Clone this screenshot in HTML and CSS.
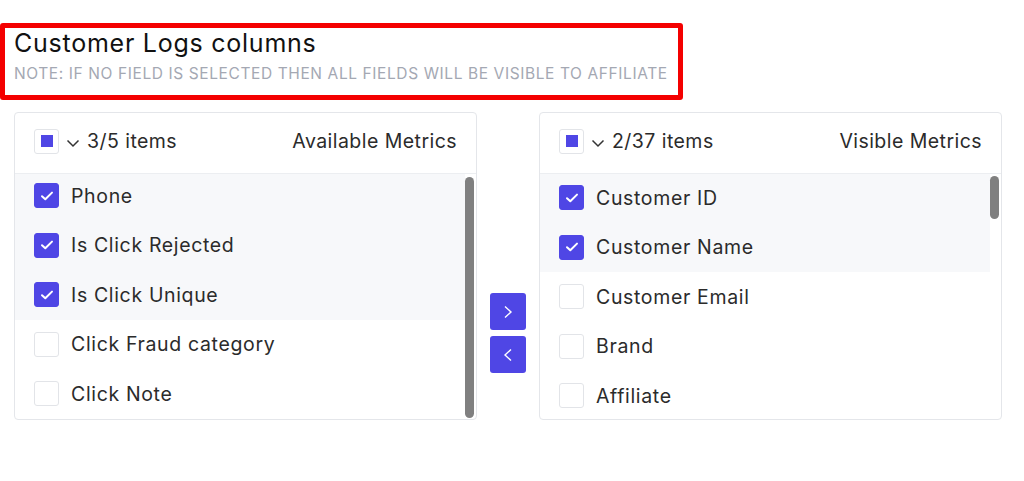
FILE: index.html
```html
<!DOCTYPE html>
<html lang="en">
<head>
<meta charset="utf-8">
<title>Customer Logs columns</title>
<link rel="stylesheet" href="styles.css">
</head>
<body>
<div class="page">
  <div class="title-box">
    <div class="title">Customer Logs columns</div>
    <div class="note">NOTE: IF NO FIELD IS SELECTED THEN ALL FIELDS WILL BE VISIBLE TO AFFILIATE</div>
  </div>

  <div class="transfer">
    <div class="panel">
      <div class="panel-head">
        <span class="cb cb-partial"><span class="cb-dot"></span></span>
        <svg class="chev" width="14" height="10" viewBox="0 0 14 10"><path d="M1.5 2.5 L7 8 L12.5 2.5" fill="none" stroke="#333" stroke-width="1.5"/></svg>
        <span class="count">3/5 items</span>
        <span class="head-title">Available Metrics</span>
      </div>
      <div class="panel-body">
        <ul class="list list-left">
          <li class="item sel"><span class="cb cb-on"><svg width="14" height="12" viewBox="0 0 14 12"><path d="M2 6.2 L5.3 9.3 L12 2.6" fill="none" stroke="#fff" stroke-width="2" stroke-linecap="round" stroke-linejoin="round"/></svg></span><span class="label">Phone</span></li>
          <li class="item sel"><span class="cb cb-on"><svg width="14" height="12" viewBox="0 0 14 12"><path d="M2 6.2 L5.3 9.3 L12 2.6" fill="none" stroke="#fff" stroke-width="2" stroke-linecap="round" stroke-linejoin="round"/></svg></span><span class="label">Is Click Rejected</span></li>
          <li class="item sel"><span class="cb cb-on"><svg width="14" height="12" viewBox="0 0 14 12"><path d="M2 6.2 L5.3 9.3 L12 2.6" fill="none" stroke="#fff" stroke-width="2" stroke-linecap="round" stroke-linejoin="round"/></svg></span><span class="label">Is Click Unique</span></li>
          <li class="item"><span class="cb"></span><span class="label">Click Fraud category</span></li>
          <li class="item"><span class="cb"></span><span class="label">Click Note</span></li>
        </ul>
        <div class="scrollbar scroll-left"></div>
      </div>
    </div>

    <div class="ops">
      <button class="op"><svg width="12" height="16" viewBox="0 0 12 16"><path d="M3 2.5 L9 8 L3 13.5" fill="none" stroke="#fff" stroke-width="1.4"/></svg></button>
      <button class="op"><svg width="12" height="16" viewBox="0 0 12 16"><path d="M9 2.5 L3 8 L9 13.5" fill="none" stroke="#fff" stroke-width="1.4"/></svg></button>
    </div>

    <div class="panel">
      <div class="panel-head">
        <span class="cb cb-partial"><span class="cb-dot"></span></span>
        <svg class="chev" width="14" height="10" viewBox="0 0 14 10"><path d="M1.5 2.5 L7 8 L12.5 2.5" fill="none" stroke="#333" stroke-width="1.5"/></svg>
        <span class="count">2/37 items</span>
        <span class="head-title">Visible Metrics</span>
      </div>
      <div class="panel-body">
        <ul class="list list-right">
          <li class="item sel"><span class="cb cb-on"><svg width="14" height="12" viewBox="0 0 14 12"><path d="M2 6.2 L5.3 9.3 L12 2.6" fill="none" stroke="#fff" stroke-width="2" stroke-linecap="round" stroke-linejoin="round"/></svg></span><span class="label">Customer ID</span></li>
          <li class="item sel"><span class="cb cb-on"><svg width="14" height="12" viewBox="0 0 14 12"><path d="M2 6.2 L5.3 9.3 L12 2.6" fill="none" stroke="#fff" stroke-width="2" stroke-linecap="round" stroke-linejoin="round"/></svg></span><span class="label">Customer Name</span></li>
          <li class="item"><span class="cb"></span><span class="label">Customer Email</span></li>
          <li class="item"><span class="cb"></span><span class="label">Brand</span></li>
          <li class="item"><span class="cb"></span><span class="label">Affiliate</span></li>
        </ul>
        <div class="scrollbar scroll-right"></div>
      </div>
    </div>
  </div>
</div>
</body>
</html>
```

FILE: styles.css
```css
* { box-sizing: border-box; }
html, body { margin: 0; padding: 0; background: #fff; }
body {
  font-family: "Inter", "Liberation Sans", sans-serif;
  color: #2b2b2b;
  width: 1024px;
  height: 481px;
  overflow: hidden;
}
.page { padding-top: 23px; }

.title-box {
  width: 683px;
  height: 77px;
  border: 5px solid #f40000;
  border-radius: 3px;
  padding: 0 0 0 9px;
}
.title {
  font-size: 25px;
  line-height: 30px;
  color: #111;
  letter-spacing: 0.75px;
}
.note {
  font-size: 15.5px;
  line-height: 20px;
  color: #a4a8b3;
  margin-top: 6px;
  letter-spacing: 0.6px;
}

.transfer {
  display: flex;
  align-items: flex-start;
  margin-top: 12px;
  padding-left: 14px;
}
.panel {
  width: 463px;
  height: 308px;
  border: 1px solid #e4e6ea;
  border-radius: 4px;
  display: flex;
  flex-direction: column;
  overflow: hidden;
}
.panel-head {
  height: 61px;
  flex: none;
  border-bottom: 1px solid #eceef1;
  display: flex;
  align-items: center;
  padding: 0 19px 4px 19px;
  font-size: 19.5px;
  letter-spacing: 0.45px;
}
.chev { margin-left: 7px; margin-top: 4px; }
.count { margin-left: 7px; color: #2b2b2b; }
.head-title { margin-left: auto; color: #2b2b2b; }

.cb {
  width: 25px;
  height: 25px;
  border: 1px solid #e2e4e8;
  border-radius: 3px;
  background: #fff;
  display: inline-flex;
  align-items: center;
  justify-content: center;
  flex: none;
}
.cb-dot { width: 12px; height: 12px; background: #4f46e5; }
.cb-on { background: #4f46e5; border-color: #4f46e5; }

.panel-body {
  position: relative;
  flex: 1;
  overflow: hidden;
}
.list { list-style: none; margin: 0; padding: 0; }
.list-left { margin-top: -3px; }
.list-right { margin-top: -1px; }
.item {
  height: 49.5px;
  display: flex;
  align-items: center;
  padding-left: 19px;
  margin-right: 11px;
  font-size: 19.5px;
}
.item.sel { background: #f7f8fa; }
.label { margin-left: 12px; letter-spacing: 0.65px; }

.scrollbar {
  position: absolute;
  right: 2px;
  width: 9px;
  border-radius: 5px;
  background: #808080;
}
.scroll-left { top: 3px; bottom: 1px; }
.scroll-right { top: 2px; height: 43px; }

.ops {
  display: flex;
  flex-direction: column;
  gap: 6px;
  width: 62px;
  align-items: center;
  padding-top: 181px;
}
.op {
  width: 36px;
  height: 37px;
  border: none;
  border-radius: 3px;
  background: #4f46e5;
  display: flex;
  align-items: center;
  justify-content: center;
  padding: 0;
}
```
